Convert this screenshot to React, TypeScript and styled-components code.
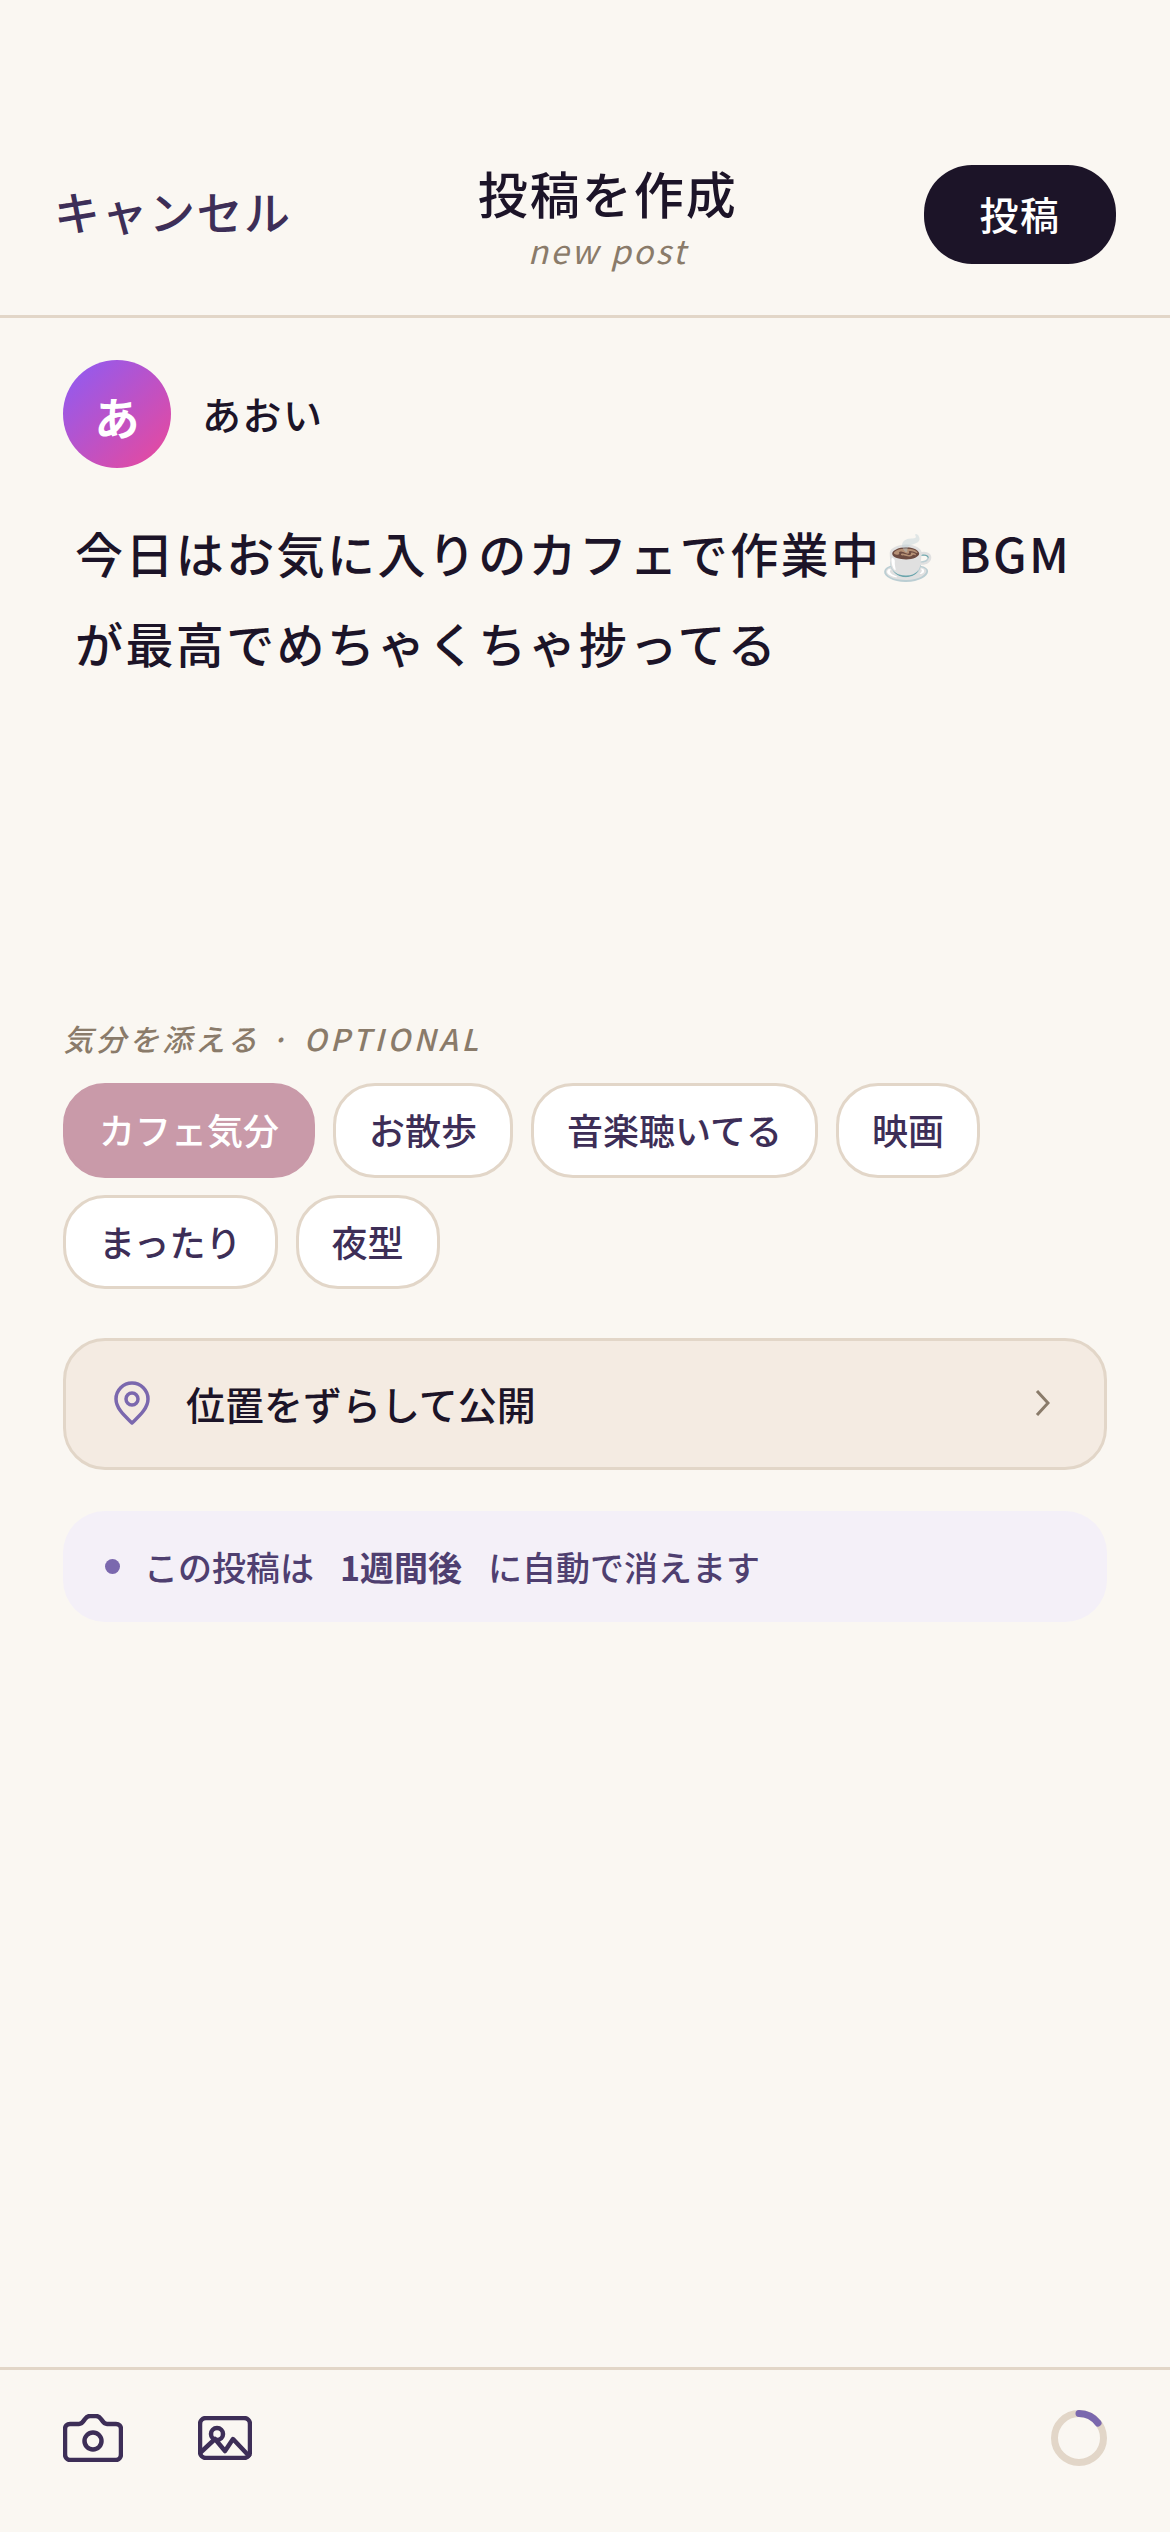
import React from "react";
import styled, { createGlobalStyle } from "styled-components";

const Global = createGlobalStyle`
  html, body { margin: 0; padding: 0; background: #FAF7F2; }
  * { box-sizing: border-box; }
`;

const Page = styled.div`
  width: 1170px;
  height: 2532px;
  display: flex;
  flex-direction: column;
  background: #FAF7F2;
  font-family: "Noto Sans CJK JP", "Noto Sans", sans-serif;
  color: #1C1428;
  overflow: hidden;
`;
const Header = styled.header`
  height: 318px;
  padding: 165px 54px 0;
  display: flex;
  justify-content: space-between;
  align-items: flex-start;
  border-bottom: 3px solid #E2D6C8;
`;
const Cancel = styled.span`
  font-size: 46px;
  line-height: 91px;
  font-weight: 500;
  letter-spacing: 1.5px;
  color: #3D2E57;
`;
const TitleBlock = styled.div`
  display: flex;
  flex-direction: column;
  align-items: center;
  margin-top: -6px;
`;
const Title = styled.div`
  font-size: 50px;
  line-height: 66px;
  font-weight: 500;
  letter-spacing: 2px;
`;
const Sub = styled.div`
  font-size: 33px;
  line-height: 44px;
  font-style: italic;
  letter-spacing: 2.5px;
  color: #8A7B6A;
  margin-top: 3px;
`;
const PostButton = styled.button`
  width: 192px;
  height: 99px;
  padding: 0 0 3px;
  border: 0;
  border-radius: 48px;
  background: #1C1428;
  color: #fff;
  font: 500 39px "Noto Sans CJK JP", sans-serif;
  letter-spacing: 1.5px;
`;
const Body = styled.main`
  flex: 1;
  padding: 42px 63px 0;
  display: flex;
  flex-direction: column;
`;
const Author = styled.div`
  display: flex;
  align-items: center;
  gap: 31px;
`;
const Avatar = styled.div`
  width: 108px;
  height: 108px;
  border-radius: 50%;
  background: linear-gradient(135deg, #8B5CF6, #EC4899);
  display: flex;
  align-items: center;
  justify-content: center;
  padding-top: 4px;
  color: #fff;
  font-size: 45px;
  font-weight: 700;
`;
const Name = styled.span`
  font-size: 39px;
  line-height: 54px;
  margin-top: -2px;
  font-weight: 500;
  letter-spacing: 1.5px;
`;
const PostText = styled.p`
  margin: 40px 0 0;
  padding: 0 12px;
  height: 508px;
  font-size: 48px;
  line-height: 88px;
  letter-spacing: 2.4px;
  font-weight: 500;
`;
const Emoji = styled.span`
  display: inline-block;
  width: 64px;
  font-size: 43px;
  letter-spacing: 0;
`;
const Label = styled.div`
  font-size: 30px;
  line-height: 44px;
  font-style: italic;
  letter-spacing: 3px;
  font-weight: 500;
  color: #8A7B6A;
`;
const LabelLatin = styled.span`
  margin-left: 4px;
  letter-spacing: 3.6px;
`;
const Chips = styled.div`
  display: flex;
  flex-wrap: wrap;
  gap: 17px 18px;
  margin-top: 23px;
`;
const Chip = styled.div<{ $active?: boolean }>`
  height: 94.5px;
  padding: 0 33px 2px;
  display: flex;
  align-items: center;
  border-radius: 42px;
  border: 3px solid ${(p) => (p.$active ? "#C99AA9" : "#E2D6C8")};
  background: ${(p) => (p.$active ? "#C99AA9" : "#fff")};
  color: ${(p) => (p.$active ? "#fff" : "#3D2E57")};
  font-size: 36px;
  font-weight: 500;
`;
const Location = styled.div`
  margin-top: 49px;
  height: 132px;
  padding: 0 54px 2px 48px;
  display: flex;
  align-items: center;
  border: 3px solid #E2D6C8;
  border-radius: 42px;
  background: #F4EBE2;
`;
const LocationText = styled.span`
  flex: 1;
  margin-left: 36px;
  font-size: 39px;
  font-weight: 500;
`;
const Notice = styled.div`
  margin-top: 41px;
  height: 111px;
  padding: 0 42px;
  display: flex;
  align-items: center;
  gap: 24px;
  border-radius: 42px;
  background: #F4F0F8;
  color: #4F3F70;
  font-size: 34px;
  font-weight: 500;
`;
const Dot = styled.i`
  width: 15px;
  height: 15px;
  border-radius: 50%;
  background: #7B68AE;
`;
const Strong = styled.b`
  font-weight: 700;
  margin: 0 26px;
`;
const Footer = styled.footer`
  height: 165px;
  padding: 0 63px 26px;
  display: flex;
  align-items: center;
  gap: 75px;
  border-top: 3px solid #E2D6C8;
`;
const Spacer = styled.div`
  flex: 1;
`;

const Camera = () => (
  <svg width="60" height="48" viewBox="0 0 60 48" fill="none" stroke="#3D2E57" strokeWidth="4.5" strokeLinejoin="round">
    <path d="M7 10h9c3 0 4-2 6-5 1.500-2 3-3 5-3h6c2 0 3.500 1 5 3 2 3 3 5 6 5h9c3 0 5 2 5 5v25c0 3-2 6-5 6H7c-3 0-5-3-5-6V15c0-3 2-5 5-5z" />
    <circle cx="30" cy="27" r="8.500" />
  </svg>
);
const Picture = () => (
  <svg width="54" height="44" viewBox="0 0 54 44" fill="none" stroke="#3D2E57" strokeWidth="4.500" strokeLinejoin="round">
    <rect x="2" y="2" width="50" height="40" rx="6" />
    <circle cx="19" cy="18" r="6" />
    <path d="M2 37l15-14 10 12 8-12 17 18" />
  </svg>
);
const Pin = () => (
  <svg width="36" height="44" viewBox="0 0 36 44" fill="none" stroke="#7B68AE" strokeWidth="3.500">
    <path d="M18 42C12 36 2 28 2 18a16 16 0 0 1 32 0c0 10-10 18-16 24z" strokeLinejoin="round" />
    <circle cx="18" cy="18" r="6" />
  </svg>
);
const Chevron = () => (
  <svg width="15" height="26" viewBox="0 0 15 26" fill="none" stroke="#8A7B6A" strokeWidth="3">
    <path d="M2 1l11 12L2 25" />
  </svg>
);
const Ring = () => (
  <svg width="56" height="56" viewBox="0 0 56 56" fill="none" strokeWidth="7">
    <circle cx="28" cy="28" r="24.500" stroke="#E2D6C8" />
    <path d="M28 3.500A24.500 24.500 0 0 1 47 13" stroke="#7B68AE" strokeLinecap="round" />
  </svg>
);

export default function App() {
  return (
    <Page>
      <Global />
      <Header>
        <Cancel>キャンセル</Cancel>
        <TitleBlock>
          <Title>投稿を作成</Title>
          <Sub>new post</Sub>
        </TitleBlock>
        <PostButton>投稿</PostButton>
      </Header>
      <Body>
        <Author>
          <Avatar>あ</Avatar>
          <Name>あおい</Name>
        </Author>
        <PostText>今日はお気に入りのカフェで作業中<Emoji>☕</Emoji> BGMが最高でめちゃくちゃ捗ってる</PostText>
        <Label>気分を添える · <LabelLatin>OPTIONAL</LabelLatin></Label>
        <Chips>
          <Chip $active>カフェ気分</Chip>
          <Chip>お散歩</Chip>
          <Chip>音楽聴いてる</Chip>
          <Chip>映画</Chip>
          <Chip>まったり</Chip>
          <Chip>夜型</Chip>
        </Chips>
        <Location>
          <Pin />
          <LocationText>位置をずらして公開</LocationText>
          <Chevron />
        </Location>
        <Notice>
          <Dot />
          <span>この投稿は<Strong>1週間後</Strong>に自動で消えます</span>
        </Notice>
      </Body>
      <Footer>
        <Camera />
        <Picture />
        <Spacer />
        <Ring />
      </Footer>
    </Page>
  );
}
